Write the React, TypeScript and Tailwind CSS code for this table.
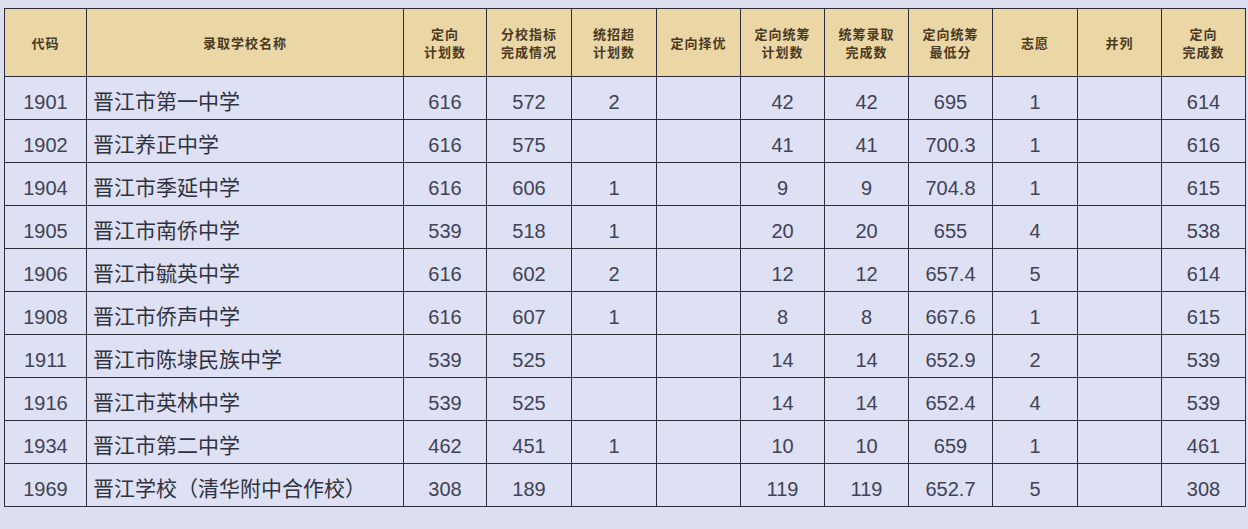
import React from "react";

const headers: string[][] = [
  ["代码"],
  ["录取学校名称"],
  ["定向", "计划数"],
  ["分校指标", "完成情况"],
  ["统招超", "计划数"],
  ["定向择优"],
  ["定向统筹", "计划数"],
  ["统筹录取", "完成数"],
  ["定向统筹", "最低分"],
  ["志愿"],
  ["并列"],
  ["定向", "完成数"],
];

const rows: string[][] = [
  ["1901", "晋江市第一中学", "616", "572", "2", "", "42", "42", "695", "1", "", "614"],
  ["1902", "晋江养正中学", "616", "575", "", "", "41", "41", "700.3", "1", "", "616"],
  ["1904", "晋江市季延中学", "616", "606", "1", "", "9", "9", "704.8", "1", "", "615"],
  ["1905", "晋江市南侨中学", "539", "518", "1", "", "20", "20", "655", "4", "", "538"],
  ["1906", "晋江市毓英中学", "616", "602", "2", "", "12", "12", "657.4", "5", "", "614"],
  ["1908", "晋江市侨声中学", "616", "607", "1", "", "8", "8", "667.6", "1", "", "615"],
  ["1911", "晋江市陈埭民族中学", "539", "525", "", "", "14", "14", "652.9", "2", "", "539"],
  ["1916", "晋江市英林中学", "539", "525", "", "", "14", "14", "652.4", "4", "", "539"],
  ["1934", "晋江市第二中学", "462", "451", "1", "", "10", "10", "659", "1", "", "461"],
  ["1969", "晋江学校（清华附中合作校）", "308", "189", "", "", "119", "119", "652.7", "5", "", "308"],
];

const cols =
  "grid grid-cols-[82px_317px_83px_85px_85px_84px_84px_84px_84px_85px_84px_84px]";

export default function App() {
  return (
    <div className="w-[1248px] h-[529px] overflow-hidden bg-[#dcdff0] pl-[4px] pt-[8px] font-['Liberation_Sans','Noto_Sans_CJK_SC',sans-serif]">
      <div className="w-fit border-l-[1.5px] border-t-[1.5px] border-[#2c2d38]">
        <div className={`${cols} h-[68px] bg-[#ebd6a6]`}>
          {headers.map((h, i) => (
            <div
              key={i}
              className="flex flex-col items-center justify-center border-r-[1.5px] border-b-[1.5px] border-[#2c2d38] text-[13px] leading-[18px] font-bold text-[#4a3a22] tracking-[1px] font-['Noto_Sans_CJK_SC',sans-serif]"
            >
              {h.map((line, j) => (
                <div key={j}>{line}</div>
              ))}
            </div>
          ))}
        </div>
        {rows.map((r, ri) => (
          <div key={ri} className={`${cols} h-[43px] bg-[#dee0f3]`}>
            {r.map((c, ci) =>
              ci === 1 ? (
                <div
                  key={ci}
                  className="flex items-center border-r-[1.5px] border-b-[1.5px] border-[#2c2d38] pl-[6px] pt-[6px] text-[21px] text-[#30323f] font-['Noto_Sans_CJK_SC',sans-serif]"
                >
                  {c}
                </div>
              ) : (
                <div
                  key={ci}
                  className="flex items-center justify-center border-r-[1.5px] border-b-[1.5px] border-[#2c2d38] pt-[7px] text-[20px] text-[#404355]"
                >
                  {c}
                </div>
              )
            )}
          </div>
        ))}
      </div>
    </div>
  );
}
